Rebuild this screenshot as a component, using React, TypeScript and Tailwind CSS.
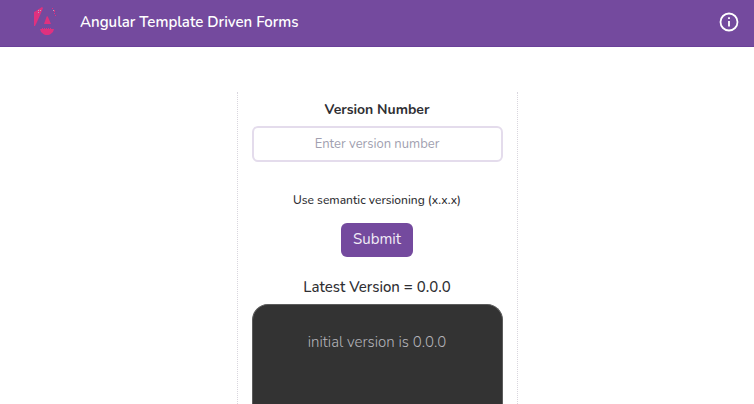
import React from "react";

function Logo() {
  return (
    <svg
      className="h-8 w-6 shrink-0"
      viewBox="0 0 24 32"
      fill="#e0317f"
      aria-hidden="true"
    >
      <path d="M2 6 L4 5 L10 1 L11 2 L9 7 L5 16 L3 20 H2 Z" />
      <path d="M15 10 L16 11 L19 18 H12 L14.5 11 Z" />
      <path d="M8 23 H22 L21 26 L18 28.5 Q15 29.5 12 28.5 L9 26 Z" />
      <path d="M20 2h1v1h-1z M22 4h1v2h-1z M22 7h1v1h-1z M23 9h1v1h-1z" />
      <path d="M10 22h1v1h-1z M12 22h1v1h-1z M14 22h1v1h-1z M16 22h1v1h-1z M18 22h1v1h-1z" />
      <path
        fill="#b5a3c9"
        d="M6 4h1v1h-1z M8 4h1v1h-1z M6 6h1v1h-1z M21 4h1v1h-1z"
      />
    </svg>
  );
}

function InfoIcon() {
  return (
    <svg className="size-5" viewBox="0 0 20 20" fill="none" stroke="#ffffff" aria-hidden="true">
      <circle cx="10" cy="10" r="8.5" strokeWidth="1.8" />
      <path d="M10 9v5.6M10 5.2v1.8" strokeWidth="1.8" />
    </svg>
  );
}

export default function App() {
  return (
    <div className="flex h-screen flex-col overflow-hidden bg-white font-['Nunito','Lato','Noto_Sans',sans-serif] text-[#2f2f33]">
      <header className="flex h-[47px] shrink-0 items-center border-b border-[#6a4199] bg-[#744a9e] pr-[15px] pb-0.5 pl-8 text-white">
        <Logo />
        <h1 className="ml-6 text-[15px] leading-5 font-semibold">
          Angular Template Driven Forms
        </h1>
        <button type="button" aria-label="About" className="ml-auto">
          <InfoIcon />
        </button>
      </header>

      <main className="flex flex-1 justify-center px-4 pt-[45px]">
        <form
          className="flex w-[281px] flex-col items-center border-x border-dotted border-[#d9d6de] px-3.5 pt-2"
          onSubmit={(event) => event.preventDefault()}
        >
          <label htmlFor="version" className="text-[14px] leading-5 font-bold">
            Version Number
          </label>
          <input
            id="version"
            type="text"
            placeholder="Enter version number"
            className="mt-1.5 h-9 w-full rounded-md border-2 border-[#e4dcec] text-center text-[13px] outline-none placeholder:text-[#a19fb0]"
          />
          <p className="mt-7 text-[12px] leading-5 font-medium">
            Use semantic versioning (x.x.x)
          </p>
          <button
            type="submit"
            className="mt-[13px] h-[34px] rounded-md bg-[#744a9e] px-3 pb-px text-[15px] text-[#f1ecf6]"
          >
            Submit
          </button>
          <h2 className="mt-5 text-[15px] leading-5 font-medium">
            Latest Version = 0.0.0
          </h2>
          <div className="mt-[7px] w-full flex-1 rounded-t-2xl border-x border-t border-[#5c5c5c] bg-[#333333] pt-[25px] text-center text-[15px] leading-6 font-light text-[#b4b3ba]">
            initial version is 0.0.0
          </div>
        </form>
      </main>
    </div>
  );
}
